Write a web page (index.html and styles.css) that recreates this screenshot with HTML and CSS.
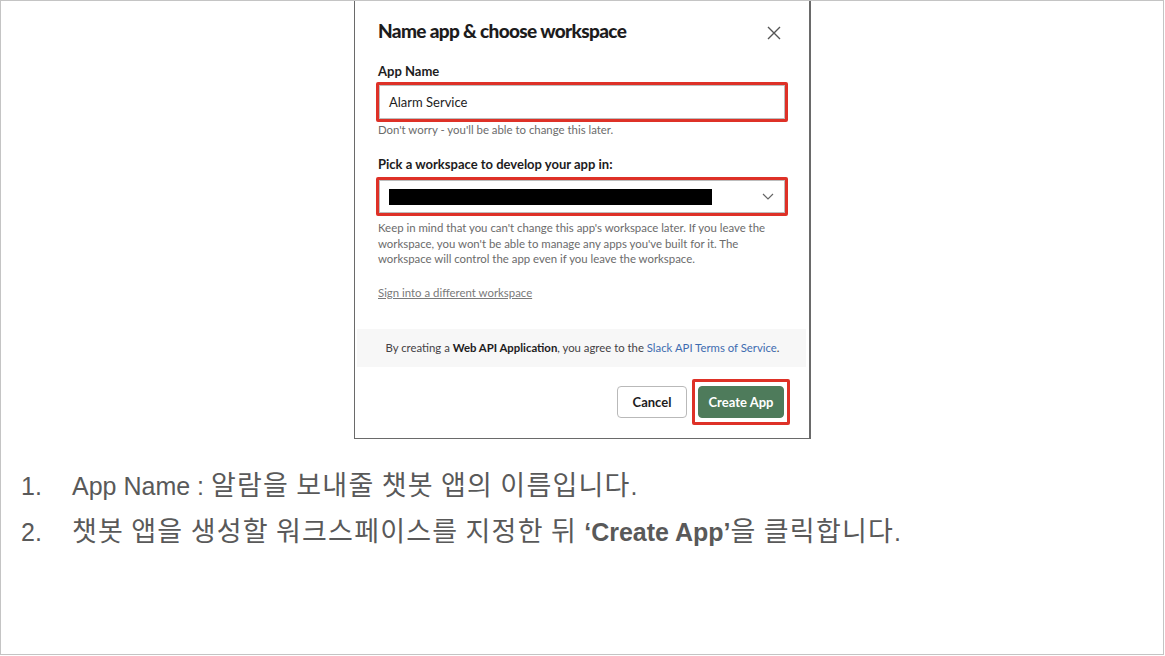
FILE: index.html
```html
<!DOCTYPE html>
<html>
<head>
<meta charset="utf-8">
<link rel="stylesheet" href="styles.css">
</head>
<body>
<div class="frame">
  <div class="shot">
    <div class="dlg">
      <div class="head">
        <h1 class="title">Name app &amp; choose workspace</h1>
        <svg class="close" width="14" height="14" viewBox="0 0 14 14"><path d="M1 1L13 13M13 1L1 13" stroke="#555" stroke-width="1.4" fill="none"/></svg>
      </div>
      <div class="label">App Name</div>
      <div class="hl">
        <div class="input">Alarm Service</div>
      </div>
      <div class="hint">Don't worry - you'll be able to change this later.</div>
      <div class="label label2">Pick a workspace to develop your app in:</div>
      <div class="hl hl2">
        <div class="input select">
          <span class="redact"></span>
          <svg class="chev" width="12" height="7" viewBox="0 0 12 7"><path d="M1 1L6 6L11 1" stroke="#666" stroke-width="1.2" fill="none"/></svg>
        </div>
      </div>
      <p class="help">Keep in mind that you can't change this app's workspace later. If you leave the workspace, you won't be able to manage any apps you've built for it. The workspace will control the app even if you leave the workspace.</p>
      <a class="signin">Sign into a different workspace</a>
    </div>
    <div class="terms"><span>By creating a <b>Web API Application</b>, you agree to the <span class="link">Slack API Terms of Service</span>.</span></div>
    <div class="actions">
      <button class="btn cancel">Cancel</button>
      <div class="hlbtn"><button class="btn create">Create App</button></div>
    </div>
  </div>
  <ol class="steps">
    <li><span class="num">1.</span><span>App Name : <span class="ko">알람을 보내줄 챗봇 앱의 이름입니다</span>.</span></li>
    <li><span class="num">2.</span><span><span class="ko">챗봇 앱을 생성할 워크스페이스를 지정한 뒤 </span><b>‘Create App’</b><span class="ko">을 클릭합니다</span>.</span></li>
  </ol>
</div>
</body>
</html>
```
FILE: styles.css
```css
* { box-sizing: border-box; }
html, body { margin: 0; padding: 0; background: #fff; }
.frame {
  width: 1164px;
  height: 655px;
  border: 1px solid #c4c4c4;
  background: #fff;
  display: flex;
  flex-direction: column;
}
.shot {
  margin-left: 353px;
  width: 457px;
  height: 438px;
  border-left: 1px solid #6a6a6a;
  border-right: 2px solid #6a6a6a;
  border-bottom: 1px solid #6a6a6a;
  background: #fff;
  font-family: Lato, "Liberation Sans", sans-serif;
  color: #1d1c1d;
  display: flex;
  flex-direction: column;
}
.dlg { padding: 0 22px 0 23px; }
.head {
  display: flex;
  justify-content: space-between;
  align-items: center;
  height: 61px;
  padding-bottom: 2px;
}
.title {
  margin: 0;
  font-size: 19px;
  font-weight: 900;
  letter-spacing: -0.65px;
  color: #1d1c1d;
}
.close { margin-right: 6px; margin-top: 4px; }
.label {
  font-size: 13px;
  font-weight: 700;
  line-height: 18px;
  height: 20px;
  color: #1d1c1d;
}
.label2 { margin-top: 18px; height: 22px; }
.hl {
  margin-left: -2px;
  margin-right: -1px;
  border: 3px solid #de3127;
  border-radius: 2px;
  height: 40px;
}
.hl2 { height: 39px; }
.input {
  height: 100%;
  border: 1px solid #bdbdbd;
  background: #fff;
  font-size: 13px;
  display: flex;
  align-items: center;
  padding-left: 9px;
  color: #1d1c1d;
}
.select { justify-content: space-between; padding-right: 10px; }
.redact {
  display: block;
  width: 323px;
  height: 16px;
  background: #000;
}
.hint {
  font-size: 11.4px;
  color: #6b6b6b;
  line-height: 14px;
  margin-top: 1px;
}
.help {
  margin: 4px 0 0;
  font-size: 11.4px;
  line-height: 15.5px;
  color: #6b6b6b;
}
.signin {
  display: block;
  margin-top: 19px;
  font-size: 11.4px;
  color: #7a7a7a;
  text-decoration: underline;
  line-height: 14px;
}
.terms {
  margin: 29px 3px 0 2px;
  height: 38px;
  background: #f7f7f7;
  font-size: 11.35px;
  color: #454245;
  display: flex;
  align-items: center;
  justify-content: center;
  padding-left: 2px;
}
.terms b { color: #1d1c1d; }
.link { color: #3e6cb0; }
.actions {
  display: flex;
  justify-content: flex-end;
  align-items: center;
  gap: 5px;
  padding: 12px 19px 0 0;
}
.btn {
  font-family: Lato, "Liberation Sans", sans-serif;
  font-size: 13px;
  font-weight: 700;
  height: 32px;
  border-radius: 4px;
  padding: 0;
  white-space: nowrap;
}
.cancel {
  width: 70px;
  background: #fff;
  border: 1px solid #b9b9b9;
  color: #1d1c1d;
}
.hlbtn {
  border: 3px solid #de3127;
  border-radius: 2px;
  padding: 4px 3px;
}
.create {
  width: 86px;
  background: #4e7b5b;
  border: 1px solid #4e7b5b;
  color: #fff;
  display: block;
}
.steps {
  list-style: none;
  margin: 22px 0 0;
  padding: 0 0 0 20px;
  font-family: "Liberation Sans", Arial, "Noto Sans CJK KR", sans-serif;
  font-size: 25px;
  color: #595959;
}
.steps li {
  display: flex;
  height: 46px;
  align-items: baseline;
  line-height: 46px;
}
.ko {
  font-family: "Noto Sans CJK KR", sans-serif;
  font-size: 27px;
  letter-spacing: 1.2px;
}
.num { width: 51px; flex: none; }
```
